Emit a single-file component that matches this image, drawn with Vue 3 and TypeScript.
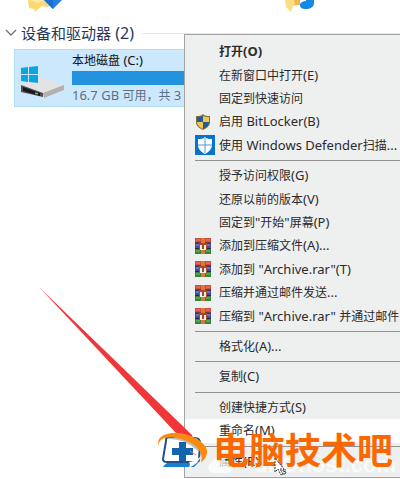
<script setup lang="ts">
type Icon = 'uac' | 'defender' | 'rar'

interface Entry {
  label?: string
  icon?: Icon
  kind?: 'default' | 'hover' | 'separator'
}

interface Run {
  text: string
  latin: boolean
}

const entries: Entry[] = [
  { label: '打开(O)', kind: 'default' },
  { label: '在新窗口中打开(E)' },
  { label: '固定到快速访问' },
  { label: '启用 BitLocker(B)', icon: 'uac' },
  { label: '使用 Windows Defender扫描...', icon: 'defender' },
  { kind: 'separator' },
  { label: '授予访问权限(G)' },
  { label: '还原以前的版本(V)' },
  { label: '固定到"开始"屏幕(P)' },
  { label: '添加到压缩文件(A)...', icon: 'rar' },
  { label: '添加到 "Archive.rar"(T)', icon: 'rar' },
  { label: '压缩并通过邮件发送...', icon: 'rar' },
  { label: '压缩到 "Archive.rar" 并通过邮件', icon: 'rar' },
  { kind: 'separator' },
  { label: '格式化(A)...' },
  { kind: 'separator' },
  { label: '复制(C)' },
  { kind: 'separator' },
  { label: '创建快捷方式(S)' },
  { label: '重命名(M)', kind: 'hover' },
  { kind: 'separator' },
  { label: '属性(R)' },
]

// Latin runs are set one pixel larger than the Chinese around them.
function runs(label = ''): Run[] {
  return (label.match(/[\x20-\x7e]+|[^\x20-\x7e]+/g) ?? []).map((text) => ({
    text,
    latin: /^[\x20-\x7e]/.test(text),
  }))
}
</script>

<template>
  <main class="explorer">
    <div class="folders" aria-hidden="true">
      <svg width="40" height="14" viewBox="0 0 40 14">
        <path d="M2 0h24v5l-4 2-6-1-5 4-2 2-1-3-5-1z" fill="#fbd872" />
        <path d="M3 0h17l-8 3z" fill="#ffe8a0" />
        <path d="M18 0h18l-9 9z" fill="#2482e2" />
        <path d="M18 0h9v9z" fill="#1c6fd0" />
      </svg>
      <svg width="40" height="14" viewBox="0 0 40 14">
        <path d="M1 0h15v5l-7 1-2 6-5-5z" fill="#fbdd83" />
        <path d="M10 0h6v5h-5z" fill="#efb950" />
        <path d="M16 5c0-3 4-4 6-4V0h8v3c0 4-4 6-8 6-4 0-6-1-6-4z" fill="#1389e5" />
      </svg>
    </div>

    <h1 class="heading">
      <svg class="chevron" width="12" height="8" viewBox="0 0 12 8">
        <path d="M1 1l5 5 5-5" fill="none" stroke="#6d7480" stroke-width="1.3" />
      </svg>
      <span>设备和驱动器<span class="count"> (2)</span></span>
      <i class="rule"></i>
    </h1>

    <section class="drive">
      <svg class="disk" width="45" height="34" viewBox="0 0 45 34">
        <path d="M0 19L19 11l24 8-21 8z" fill="#e4e3e3" />
        <path d="M0 19l22 8v4L0 26z" fill="#504e50" />
        <path d="M2 21l17 6v3L2 25z" fill="#171b1d" />
        <path d="M22 27l21-8v5l-20 8z" fill="#b4b0b0" />
        <path d="M14 27l3 1" stroke="#73b94b" stroke-width="1.5" />
        <path d="M0 2l7-1v7H0zM8 1l9-1v8H8zM0 9h7v7l-7-1zM8 9h9v8l-9-1z" fill="#0da5e1" />
      </svg>
      <div class="info">
        <div class="name">本地磁盘<span class="latin"> (C:)</span></div>
        <div class="capacity"></div>
        <div class="space"><span class="latin">16.7 GB </span>可用，共<span class="latin"> 3</span></div>
      </div>
    </section>

    <ul class="menu">
      <template v-for="(entry, index) in entries" :key="index">
        <li v-if="entry.kind === 'separator'" class="separator" role="separator"></li>
        <li v-else class="row" :class="entry.kind">
          <button type="button" class="command">
            <span class="slot">
              <svg v-if="entry.icon === 'uac'" width="16" height="16" viewBox="0 0 16 16">
                <path d="M8 0c2 2 4 2 7 2v6c0 4-3 6-7 8-4-2-7-4-7-8V2c3 0 5 0 7-2z" fill="#826e42" />
                <path d="M8 2v6H2V3c2 0 4 0 6-1zM8 8h6c0 3-2 5-6 7z" fill="#245d93" />
                <path d="M8 2c2 1 4 1 6 1v5H8zM2 8h6v7c-4-2-6-4-6-7z" fill="#f4c553" />
              </svg>
              <svg v-else-if="entry.icon === 'defender'" width="20" height="20" viewBox="0 0 20 20">
                <path d="M0 0h20v20H0z" fill="#0873cc" />
                <path d="M10 2c2 2 4 2 7 2v6c0 4-3 7-7 9-4-2-7-5-7-9V4c3 0 5 0 7-2z" fill="#fff" />
                <path d="M10 3v15M3 10h14" stroke="#4b9bdb" stroke-width="1" />
              </svg>
              <svg v-else-if="entry.icon === 'rar'" width="16" height="16" viewBox="0 0 16 16">
                <path d="M0 0h16v5H0z" fill="#d04a43" />
                <path d="M0 5h16v6H0z" fill="#4b4c9c" />
                <path d="M0 11h16v5H0z" fill="#36833b" />
                <path d="M0 5h16M0 10.500h16" stroke="#272735" />
                <path d="M1 2h4M11 2h4" stroke="#f28061" />
                <path d="M1 7h3M12 7h3" stroke="#8a9bdd" />
                <path d="M1 13h4M11 13h4" stroke="#6fc760" />
                <path d="M6 0h4v16H6z" fill="#d9782f" />
                <path d="M4 5h8v7H4z" fill="#a24b2c" />
                <path d="M5 7h2v4h2V7h2v5H5z" fill="#f4eee7" />
              </svg>
            </span>
            <span class="label"><span v-for="(run, n) in runs(entry.label)" :key="n" :class="{ latin: run.latin }">{{ run.text }}</span></span>
          </button>
        </li>
      </template>
    </ul>

    <div class="site">
      <svg width="28" height="18" viewBox="0 0 28 18">
        <path d="M6 17a6 6 0 0 1 0-11 8 8 0 0 1 14-1 6 6 0 0 1 2 12z" fill="#fff" />
      </svg>
      <span>unGhost.com</span>
    </div>

    <svg class="arrow" width="160" height="170" viewBox="0 0 160 170">
      <path d="M1 0L154 148l4 16-20-18z" fill="#ef3639" />
    </svg>

    <div class="brand">
      <svg class="logo" width="52" height="40" viewBox="0 0 52 40">
        <path d="M9 7h28q5 0 5 5l-1 17q0 2-4 2H9q-4 0-4-3L8 10q0-3 1-3z" fill="#fff" stroke="#204f8d" stroke-width="2" />
        <path d="M9 8q17-1 31 12V10q0-3-3-3H10z" fill="#b7c2c8" />
        <path d="M21 11h7v6h7v7h-7v6h-7v-6h-7v-7h7z" fill="#1265ad" />
        <path d="M32 20l6 4" stroke="#ef777a" stroke-width="1" />
        <path d="M9 32h31l-4 4H5q1-2 4-4z" fill="#1681cd" />
        <path d="M31 31q8-1 12-6-2 7-12 12l1-4z" fill="#fff" />
        <path d="M1 15C-3 6 9 1 20 2c16 1 31 12 29 20-1 5-3 7-6 9 3-11-6-19-20-23C11 5 0 6 1 15z" fill="#f98b13" />
      </svg>
      <strong>电脑技术吧</strong>
    </div>

    <svg class="cursor" width="14" height="20" viewBox="0 0 14 20">
      <path d="M1 1v14l3-3 3 6 2-1-3-5h4z" fill="#fff" stroke="#333" stroke-width="1" stroke-dasharray="2 1" />
      <path d="M12 13q-4-1-3 1l3 1q0 3-4 2" fill="none" stroke="#444" />
    </svg>
  </main>
</template>

<style>
body {
  margin: 0;
  background: #fff;
}
</style>

<style scoped>
.explorer {
  position: relative;
  box-sizing: border-box;
  min-height: 100vh;
  overflow: hidden;
  font-family: "Noto Sans", "Noto Sans CJK SC", sans-serif;
  font-size: 12px;
  color: #2b2b2b;
}

.latin {
  font-size: 13px;
}

.folders {
  display: flex;
  gap: 218px;
  height: 14px;
  padding-left: 26px;
}

.heading {
  display: flex;
  align-items: center;
  gap: 4px;
  height: 20px;
  margin: 9px 0 6px;
  padding-left: 5px;
  font-size: 15px;
  font-weight: 400;
  line-height: 20px;
  color: #28365c;
  white-space: nowrap;
}

.count {
  font-size: 16px;
}

.rule {
  flex: 1;
  height: 1px;
  margin-left: 4px;
  background: #e5e8ec;
}

.drive {
  display: flex;
  box-sizing: border-box;
  height: 58px;
  margin-left: 14px;
  border: 1px solid #b2dcf8;
  background: #cce8fd;
}

.disk {
  flex: none;
  margin: 16px 6px 0;
}

.info {
  flex: 1;
  white-space: nowrap;
}

.name {
  height: 21px;
  line-height: 20px;
  color: #111;
}

.capacity {
  height: 14px;
  background: #2393df;
}

.space {
  line-height: 20px;
  color: #5b6f82;
}

.menu {
  position: absolute;
  top: 34px;
  right: -20px;
  bottom: 1px;
  left: 184px;
  display: flex;
  flex-direction: column;
  box-sizing: border-box;
  margin: 0;
  padding: 5px 0 4px;
  border: 1px solid #a2a2a2;
  background: #eeefef;
  list-style: none;
}

.row {
  flex: 1;
  display: flex;
}

.hover {
  background: #fff;
}

.command {
  flex: 1;
  display: flex;
  align-items: center;
  gap: 4px;
  padding: 0 0 0 10px;
  border: 0;
  background: none;
  font: inherit;
  color: inherit;
  text-align: left;
  white-space: nowrap;
}

.label {
  line-height: 18px;
  white-space: pre;
}

.default .command {
  font-weight: 700;
}

.slot {
  display: flex;
  width: 20px;
}

.slot svg {
  flex: none;
}

.separator {
  height: 1px;
  margin: 3px 0 3px 10px;
  background: #929292;
}

.site {
  position: absolute;
  right: 4px;
  bottom: 2px;
  display: flex;
  align-items: center;
  gap: 20px;
  font-family: "Liberation Sans", sans-serif;
  font-size: 22px;
  font-weight: 700;
  line-height: 24px;
  color: #fff;
  opacity: 0.7;
}

.arrow {
  position: absolute;
  top: 287px;
  left: 38px;
}

.brand {
  position: absolute;
  bottom: 8px;
  left: 158px;
  display: flex;
  align-items: flex-end;
  gap: 3px;
}

.brand strong {
  font-family: "Noto Sans CJK SC", sans-serif;
  font-size: 36px;
  font-weight: 700;
  line-height: 46px;
  color: #fb6800;
  white-space: nowrap;
}

.cursor {
  position: absolute;
  bottom: 2px;
  left: 274px;
}
</style>
